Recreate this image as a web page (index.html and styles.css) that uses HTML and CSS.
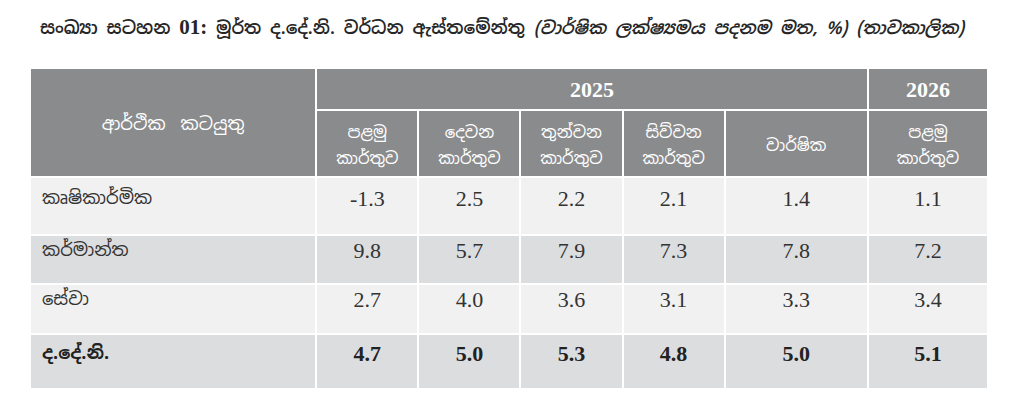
FILE: index.html
```html
<!DOCTYPE html>
<html lang="si">
<head>
<meta charset="utf-8">
<link rel="stylesheet" href="styles.css">
</head>
<body>
<div class="page">
  <h1 class="title">සංඛ්‍යා සටහන <b class="num">01:</b> මූර්ත ද.දේ.නි. වර්ධන ඇස්තමේන්තු <i class="note">(වාර්ෂික ලක්ෂ්‍යමය පදනම මත, %) (තාවකාලික)</i></h1>
  <table class="gdp">
    <colgroup>
      <col class="c-name"><col class="c-q"><col class="c-q"><col class="c-q"><col class="c-q"><col class="c-y"><col class="c-n">
    </colgroup>
    <thead>
      <tr class="h1">
        <th rowspan="2" class="name-h">ආර්ථික කටයුතු</th>
        <th colspan="5" class="year">2025</th>
        <th class="year">2026</th>
      </tr>
      <tr class="h2">
        <th>පළමු<br>කාර්තුව</th>
        <th>දෙවන<br>කාර්තුව</th>
        <th>තුන්වන<br>කාර්තුව</th>
        <th>සිව්වන<br>කාර්තුව</th>
        <th>වාර්ෂික</th>
        <th>පළමු<br>කාර්තුව</th>
      </tr>
    </thead>
    <tbody>
      <tr class="light r1"><td class="name">කෘෂිකාර්මික</td><td>-1.3</td><td>2.5</td><td>2.2</td><td>2.1</td><td>1.4</td><td>1.1</td></tr>
      <tr class="dark r2"><td class="name">කර්මාන්ත</td><td>9.8</td><td>5.7</td><td>7.9</td><td>7.3</td><td>7.8</td><td>7.2</td></tr>
      <tr class="light r3"><td class="name">සේවා</td><td>2.7</td><td>4.0</td><td>3.6</td><td>3.1</td><td>3.3</td><td>3.4</td></tr>
      <tr class="dark r4 total"><td class="name">ද.දේ.නි.</td><td>4.7</td><td>5.0</td><td>5.3</td><td>4.8</td><td>5.0</td><td>5.1</td></tr>
    </tbody>
  </table>
</div>
</body>
</html>
```

FILE: styles.css
```css
html, body {
  margin: 0;
  padding: 0;
  background: #ffffff;
}
body {
  font-family: "Noto Sans Sinhala", "Noto Serif Sinhala", "Iskoola Pota", "Lohit Sinhala", "Liberation Serif", serif;
  color: #2a2a2a;
}
.page {
  padding: 15px 0 0 29px;
}
.title {
  margin: 0 0 0 11px;
  font-size: 17.7px;
  font-weight: 600;
  line-height: 24px;
  color: #262626;
  white-space: nowrap;
}
.num {
  font-family: "Liberation Serif", serif;
  font-size: 21px;
  font-weight: 700;
}
.note {
  font-style: italic;
}
.gdp {
  margin-top: 27px;
  border-collapse: separate;
  border-spacing: 2px;
  table-layout: fixed;
  width: 960px;
}
.c-name { width: 284px; }
.c-q { width: 100px; }
.c-y { width: 141px; }
.c-n { width: 118px; }
th {
  background: #8a8b8d;
  color: #ffffff;
  font-weight: 400;
  text-align: center;
  padding: 0;
}
.h1 th.year {
  height: 40px;
  font-family: "Liberation Serif", serif;
  font-size: 22px;
  font-weight: 700;
  padding-top: 1px;
}
.name-h {
  font-size: 18px;
  word-spacing: 6px;
  padding-top: 2px;
}
.h2 th {
  height: 65px;
  font-size: 16.5px;
  line-height: 26px;
  padding-top: 2px;
}
td {
  font-family: "Liberation Serif", serif;
  font-size: 22px;
  text-align: center;
  vertical-align: top;
  color: #333333;
  padding: 12px 0 0 0;
}
td.name {
  font-family: "Noto Sans Sinhala", "Noto Serif Sinhala", "Liberation Serif", serif;
  font-size: 18px;
  text-align: left;
  padding-left: 11px;
}
.light td { background: #f1f1f1; }
.dark td { background: #dcdddf; }
.r1 td { height: 56px; padding-top: 8px; }
.r2 td { height: 47px; padding-top: 2px; }
.r3 td { height: 48px; padding-top: 2px; }
.r4 td { height: 53px; padding-top: 6px; }
.total td { font-weight: 700; color: #222222; }
td, th { box-sizing: border-box; }
```
